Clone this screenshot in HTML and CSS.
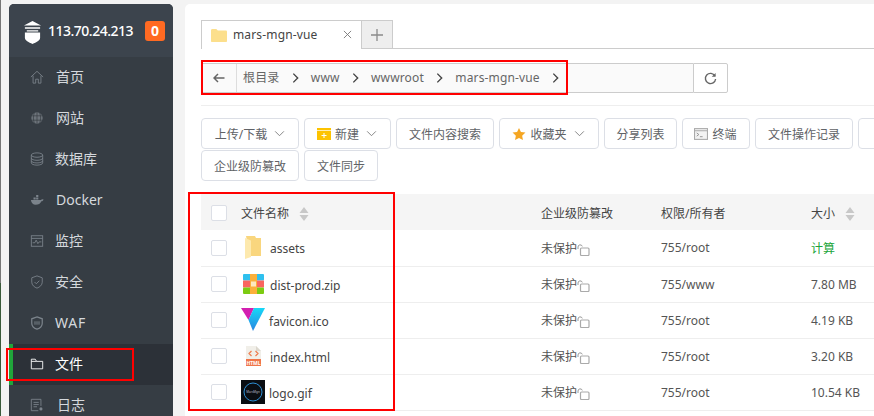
FILE: index.html
```html
<!DOCTYPE html>
<html>
    <head>
        <meta charset="utf-8">
        <link rel="stylesheet" href="styles.css">
    </head>
    <body>
        <svg class="defs" width="0" height="0">
            <defs>
                <linearGradient id="vuegrad" x1="0" y1="0" x2="0" y2="1">
                    <stop offset="0" stop-color="#16d8f8"/>
                    <stop offset="1" stop-color="#2a85e0"/>
                </linearGradient>
            </defs>
            <symbol id="lock" viewBox="0 0 13 12">
                <path d="M1 5V3a2.200 2.200 0 0 1 4.300-.6" fill="none" stroke="#999" stroke-width="1"/>
                <rect x="3.500" y="4" width="8.500" height="7.500" rx="1" fill="#fff" stroke="#aaa" stroke-width="1.200"/>
            </symbol>
            <symbol id="sort" viewBox="0 0 10 14">
                <path d="M5 0l4.500 6H.5zM5 14L.5 8h9z" fill="#c8c8c8"/>
            </symbol>
            <symbol id="arrow" viewBox="0 0 12 8">
                <path d="M1 1.500l5 5 5-5" fill="none" stroke="#777" stroke-width="1"/>
            </symbol>
            <symbol id="crumb" viewBox="0 0 8 12">
                <path d="M1.500 1l5 5-5 5" fill="none" stroke="#444" stroke-width="1.600"/>
            </symbol>
        </svg>
        <div class="container">
            <div class="menu">
                <div class="server">
                    <svg class="logo" viewBox="0 0 20 24">
                        <path d="M10 0L1 4.500h18zM2 6.500h16v1.500H2zM4 9.500h12V11H4z" fill="#fff"/>
                        <path d="M2 12h16v5.500c0 3-4 5-8 6.500-4-1.500-8-3.500-8-6.500z" fill="#fff"/>
                    </svg>
                    <span class="ip">113.70.24.213</span>
                    <span class="badge">0</span>
                </div>
                <ul class="navlist">
                    <li>
                        <svg viewBox="0 0 16 16"><path d="M1 8l7-6.500L15 8M3.500 6.500V15h3v-4.500h3V15h3V6.500" fill="none" stroke="#7b838b"/></svg>
                        <span>首页</span>
                    </li>
                    <li>
                        <svg viewBox="0 0 16 16"><circle cx="8" cy="8" r="6.500" fill="#6d747b"/><path d="M1.500 5.500h13M1.500 10.500h13M8 1.500v13M5 2c-1.500 3.500-1.500 8.500 0 12M11 2c1.500 3.500 1.500 8.500 0 12" fill="none" stroke="#363d44" stroke-width=".8"/></svg>
                        <span>网站</span>
                    </li>
                    <li>
                        <svg viewBox="0 0 16 16"><ellipse cx="8" cy="3.500" rx="6.500" ry="2.500" fill="none" stroke="#7b838b"/><path d="M1.500 3.500v9c0 1.400 3 2.500 6.500 2.500s6.500-1.100 6.500-2.500v-9M1.500 7c0 1.400 3 2.500 6.500 2.500S14.500 8.400 14.500 7M1.500 10c0 1.400 3 2.500 6.500 2.500s6.500-1.100 6.500-2.500" fill="none" stroke="#7b838b"/></svg>
                        <span class="tight">数据库</span>
                    </li>
                    <li>
                        <svg viewBox="0 0 16 16"><path d="M1 8h11.500c.5-.8 1.500-1 3-.7-.5 1.500-1.500 2.200-2.500 2.200-1 2.700-3.500 4-6.500 4C3.500 13.500 1.500 11.500 1 8z" fill="#7b838b"/><path d="M4 5h2.500v2.300H4zM7 5h2.500v2.300H7zM7 2.300h2.500v2.300H7z" fill="#7b838b"/></svg>
                        <span>Docker</span>
                    </li>
                    <li>
                        <svg viewBox="0 0 16 16"><rect x="1.500" y="2" width="13" height="12" fill="none" stroke="#7b838b"/><path d="M1.500 5h13" stroke="#7b838b"/><path d="M3 10h2.500l1.500-3 2 4 1.500-2H13" fill="none" stroke="#8c949b" stroke-width=".8"/></svg>
                        <span class="tight">监控</span>
                    </li>
                    <li>
                        <svg viewBox="0 0 16 16"><path d="M8 1l6 2.200v5C14 11.500 11 14 8 15c-3-1-6-3.500-6-6.800v-5z" fill="none" stroke="#7b838b"/><path d="M5.200 8l2 2 3.500-3.500" fill="none" stroke="#7b838b"/></svg>
                        <span class="tight">安全</span>
                    </li>
                    <li>
                        <svg viewBox="0 0 16 16"><path d="M8 1l6 2.200v5C14 11.500 11 14 8 15c-3-1-6-3.500-6-6.800v-5z" fill="none" stroke="#7b838b" stroke-width="1.400"/><path d="M4.500 6.800h7M4.500 8h7M4.500 9.200h7" stroke="#7b838b" stroke-width=".7"/></svg>
                        <span class="tight waf">WAF</span>
                    </li>
                    <li class="active">
                        <svg viewBox="0 0 16 16"><path d="M1.500 2.500h4.500l1.500 2.500H14.500v8.500h-13z M1.500 5h6" fill="none" stroke="#fff"/></svg>
                        <span class="tight">文件</span>
                    </li>
                    <li>
                        <svg viewBox="0 0 16 16"><path d="M12.500 9V1.500h-11v13h8M4 5h6M4 7.500h6M4 10h4" fill="none" stroke="#7b838b"/><circle cx="12.500" cy="12.500" r="1.800" fill="#7b838b"/></svg>
                        <span class="wide">日志</span>
                    </li>
                </ul>
            </div>
            <div class="content">
                <div class="tabs">
                    <div class="tab">
                        <svg class="tabfolder" viewBox="0 0 16 13"><path d="M0 1.500C0 .7.500 0 1.300 0h4l1.500 1.500h8c.7 0 1.200.5 1.200 1.200V12c0 .6-.5 1-1 1H1c-.6 0-1-.4-1-1z" fill="#fcdf8c"/></svg>
                        <span class="tabname">mars-mgn-vue</span>
                        <svg class="tabclose" viewBox="0 0 10 10"><path d="M1 1l8 8M9 1l-8 8" stroke="#777" stroke-width="1"/></svg>
                    </div>
                    <div class="tabadd">
                        <svg viewBox="0 0 12 12"><path d="M6 0v12M0 6h12" stroke="#8a8a8a" stroke-width="1.300"/></svg>
                    </div>
                </div>
                <div class="pathbar">
                    <div class="pathinput">
                        <span class="back">
                            <svg viewBox="0 0 12 10"><path d="M11.500 5H1M5 1L1 5l4 4" fill="none" stroke="#666" stroke-width="1.500"/></svg>
                        </span>
                        <span class="crumb">根目录</span>
                        <svg class="sep"><use href="#crumb"/></svg>
                        <span class="crumb">www</span>
                        <svg class="sep"><use href="#crumb"/></svg>
                        <span class="crumb">wwwroot</span>
                        <svg class="sep"><use href="#crumb"/></svg>
                        <span class="crumb">mars-mgn-vue</span>
                        <svg class="sep"><use href="#crumb"/></svg>
                    </div>
                    <div class="refresh">
                        <svg viewBox="0 0 14 14"><path d="M11.800 4.200A5.500 5.500 0 1 0 12.500 7.500" fill="none" stroke="#666" stroke-width="1.500"/><path d="M12.500 1v4.200H8.300z" fill="#666"/></svg>
                    </div>
                </div>
                <div class="toolbar">
                    <div class="btn w98">上传/下载<svg class="caret"><use href="#arrow"/></svg></div>
                    <div class="btn w86">
                        <svg class="btnicon" viewBox="0 0 14 12"><path d="M0 0h14v12H0z" fill="#fdc300"/><path d="M0 2.500h14" stroke="#fff" stroke-width=".7"/><path d="M7 5v5M4.500 7.500h5" stroke="#fff" stroke-width="1"/></svg>新建<svg class="caret"><use href="#arrow"/></svg>
                    </div>
                    <div class="btn w97">文件内容搜索</div>
                    <div class="btn w99">
                        <svg class="btnicon" viewBox="0 0 14 13"><path d="M7 0l2.100 4.400 4.900.6-3.600 3.300.9 4.700L7 10.700 2.700 13l.9-4.700L0 5l4.900-.6z" fill="#f5a623"/></svg>收藏夹<svg class="caret"><use href="#arrow"/></svg>
                    </div>
                    <div class="btn w73">分享列表</div>
                    <div class="btn w67">
                        <svg class="btnicon" viewBox="0 0 13 11"><rect x=".5" y=".5" width="12" height="10" fill="#f3f3f3" stroke="#aaa"/><path d="M.5 2.500h12" stroke="#aaa"/><path d="M2.500 4.500l2 1.500-2 1.500M5.500 8h2.500" fill="none" stroke="#888" stroke-width=".8"/></svg>终端
                    </div>
                    <div class="btn w98">文件操作记录</div>
                    <div class="btn w98">文件</div>
                </div>
                <div class="toolbar">
                    <div class="btn w98">企业级防篡改</div>
                    <div class="btn w74">文件同步</div>
                </div>
                <table class="files">
                    <thead>
                        <tr>
                            <th class="check"><i class="box"></i></th>
                            <th class="name">文件名称<svg class="sort"><use href="#sort"/></svg></th>
                            <th class="guard">企业级防篡改</th>
                            <th class="perm">权限/所有者</th>
                            <th class="size">大小<svg class="sort"><use href="#sort"/></svg></th>
                        </tr>
                    </thead>
                    <tbody>
                        <tr>
                            <td class="check"><i class="box"></i></td>
                            <td class="name"><div class="filecell">
                                <svg class="fileicon" viewBox="0 0 24 24"><path d="M5 0h9l1 2h5v18H9z" fill="#f9d67e"/><path d="M4 2l6 2.500V21l-6 2z" fill="#fde9ae"/></svg>
                                <span>assets</span>
                            </div></td>
                            <td class="guard">未保护<svg class="lock"><use href="#lock"/></svg></td>
                            <td class="perm">755/root</td>
                            <td class="size calc">计算</td>
                        </tr>
                        <tr>
                            <td class="check"><i class="box"></i></td>
                            <td class="name"><div class="filecell">
                                <svg class="fileicon" viewBox="0 0 24 24"><rect x="2" y="2" width="21" height="6.500" rx="1" fill="#2fc0ee"/><rect x="2" y="8.500" width="21" height="7" fill="#f9655f"/><rect x="2" y="15.500" width="21" height="6.500" rx="1" fill="#7ccb11"/><rect x="9" y="2" width="7" height="20" fill="#fbb03b"/><rect x="10" y="9.500" width="5" height="5" fill="#fde9c0"/></svg>
                                <span>dist-prod.zip</span>
                            </div></td>
                            <td class="guard">未保护<svg class="lock"><use href="#lock"/></svg></td>
                            <td class="perm">755/www</td>
                            <td class="size">7.80 MB</td>
                        </tr>
                        <tr>
                            <td class="check"><i class="box"></i></td>
                            <td class="name"><div class="filecell">
                                <svg class="fileicon" viewBox="0 0 24 24"><path d="M0 0h13L7.500 12z" fill="#d21fb0"/><path d="M24 0H13L7.500 12 12 23z" fill="url(#vuegrad)"/></svg>
                                <span class="closer">favicon.ico</span>
                            </div></td>
                            <td class="guard">未保护<svg class="lock"><use href="#lock"/></svg></td>
                            <td class="perm">755/root</td>
                            <td class="size">4.19 KB</td>
                        </tr>
                        <tr>
                            <td class="check"><i class="box"></i></td>
                            <td class="name"><div class="filecell">
                                <svg class="fileicon" viewBox="0 0 24 24"><path d="M5 2h10l5 5v15H5z" fill="#f1efe9"/><path d="M15 2l5 5h-5z" fill="#dcd8ce"/><path d="M5 15h15v7H5z" fill="#f0764a"/><path d="M10.500 7L8 9.500l2.500 2.500M14.500 7L17 9.500 14.500 12" fill="none" stroke="#ee7a4c" stroke-width="1.200"/><text x="12.500" y="21" class="htmltag">HTML</text></svg>
                                <span>index.html</span>
                            </div></td>
                            <td class="guard">未保护<svg class="lock"><use href="#lock"/></svg></td>
                            <td class="perm">755/root</td>
                            <td class="size">3.20 KB</td>
                        </tr>
                        <tr>
                            <td class="check"><i class="box"></i></td>
                            <td class="name"><div class="filecell">
                                <svg class="fileicon" viewBox="0 0 24 24"><rect width="24" height="24" fill="#0a0d12"/><circle cx="12" cy="12" r="9" fill="none" stroke="#2d8fd5" stroke-width="1"/><text x="12" y="13" class="logotag">MarsMgn</text></svg>
                                <span class="closer">logo.gif</span>
                            </div></td>
                            <td class="guard">未保护<svg class="lock"><use href="#lock"/></svg></td>
                            <td class="perm">755/root</td>
                            <td class="size">10.54 KB</td>
                        </tr>
                    </tbody>
                </table>
            </div>
        </div>
        <div class="mark mark-path"></div>
        <div class="mark mark-table"></div>
        <div class="mark mark-menu"></div>
    </body>
</html>
```

FILE: styles.css
```css
html, body{
    margin: 0;
    height: 100%;
    overflow: hidden;
}
body{
    position: relative;
    background: #f3f3f3;
    color: #555;
    font-family: "Noto Sans", "Noto Sans CJK SC", sans-serif;
    font-size: 12px;
}
.defs{
    position: absolute;
}
.container{
    display: flex;
    gap: 12px;
    height: 416px;
    padding: 4px 0 0 8px;
    box-sizing: border-box;
    border-left: 1px solid #777;
    border-image: linear-gradient(#777 68%, #3a5a3a 68%) 1;
}
.menu{
    flex: 0 0 164px;
    background: #363d44;
    border-radius: 5px 5px 0 0;
    overflow: hidden;
}
.server{
    display: flex;
    align-items: center;
    height: 53px;
    padding: 0 8px 0 14px;
    box-sizing: border-box;
    background: #3c444d;
    color: #fff;
}
.logo{
    width: 19px;
    height: 23px;
    margin-top: 3px;
}
.ip{
    flex: 1;
    margin-left: 6px;
    font-size: 14px;
    font-weight: 500;
    letter-spacing: -.5px;
}
.badge{
    width: 20px;
    height: 20px;
    line-height: 20px;
    text-align: center;
    background: #ff6a22;
    border-radius: 3px;
    font-size: 14px;
    font-weight: bold;
}
.navlist{
    list-style-type: none;
    margin: 0;
    padding: 0;
}
.navlist li{
    display: flex;
    align-items: center;
    height: 41px;
    padding-left: 21px;
    color: #d5d9dd;
    font-size: 14px;
}
.navlist li svg{
    width: 14px;
    height: 14px;
    margin-right: 11px;
    margin-top: -1px;
}
.navlist li span{
    margin-left: 1px;
    padding-bottom: 3px;
}
.navlist li .tight{
    margin-left: 0;
}
.navlist li .wide{
    margin-left: 2px;
}
.navlist li .waf{
    letter-spacing: .8px;
}
.navlist .active{
    box-sizing: border-box;
    background: #2c3138;
    border-left: 4px solid #20a53a;
    padding-left: 17px;
    color: #fff;
}
.content{
    flex: 1;
    min-width: 0;
    background: #fff;
    border-radius: 5px 0 0 0;
    padding: 16px 0 0 16px;
    overflow: hidden;
}
.tabs{
    display: flex;
    height: 29px;
    box-sizing: border-box;
    border-bottom: 1px solid #ccc;
}
.tab{
    display: flex;
    align-items: center;
    width: 161px;
    height: 29px;
    box-sizing: border-box;
    padding: 0 9px;
    background: #fff;
    border: 1px solid #ccc;
    border-bottom: none;
}
.tabfolder{
    width: 16px;
    height: 13px;
    margin-right: 6px;
}
.tabname{
    flex: 1;
    color: #444;
    letter-spacing: .15px;
    padding-bottom: 1px;
}
.tabclose{
    width: 9px;
    height: 9px;
    margin-top: -2px;
}
.tabadd{
    display: flex;
    align-items: center;
    justify-content: center;
    width: 31px;
    height: 28px;
    box-sizing: border-box;
    background: #eee;
    border: 1px solid #ccc;
    border-left: none;
    border-bottom: none;
}
.tabadd svg{
    width: 12px;
    height: 12px;
}
.pathbar{
    display: flex;
    height: 30px;
    margin-top: 14px;
    padding-bottom: 12px;
    border-bottom: 1px solid #eee;
}
.pathinput{
    display: flex;
    align-items: center;
    width: 492px;
    box-sizing: border-box;
    background: #fafafa;
    border: 1px solid #ccc;
    border-right: none;
    border-radius: 2px 0 0 2px;
}
.back{
    display: flex;
    align-items: center;
    justify-content: center;
    width: 34px;
    height: 28px;
    border-right: 1px solid #ddd;
}
.back svg{
    width: 12px;
    height: 10px;
}
.crumb{
    padding: 0 5px 2px 6px;
    color: #666;
    letter-spacing: .15px;
}
.sep{
    width: 7px;
    height: 12px;
    margin: 0 6px 0 7.4px;
}
.refresh{
    display: flex;
    align-items: center;
    justify-content: center;
    width: 35px;
    box-sizing: border-box;
    border: 1px solid #ccc;
    border-radius: 0 2px 2px 0;
}
.refresh svg{
    width: 13px;
    height: 13px;
}
.toolbar{
    display: flex;
    gap: 5px;
    height: 31px;
    margin-bottom: 1px;
}
.pathbar + .toolbar{
    margin-top: 12px;
}
.btn{
    display: flex;
    flex: none;
    align-items: center;
    justify-content: center;
    height: 31px;
    box-sizing: border-box;
    background: #fff;
    border: 1px solid #dcdfe6;
    border-radius: 4px;
    color: #606266;
    white-space: nowrap;
}
.w98{ width: 98px; }
.w86{ width: 87px; }
.w97{ width: 98px; }
.w99{ width: 100px; }
.w73{ width: 73px; }
.w67{ width: 68px; }
.w74{ width: 74px; }
.caret{
    width: 11px;
    height: 7px;
    margin-left: 7px;
}
.btnicon{
    width: 14px;
    height: 12px;
    margin-right: 4px;
    margin-left: -1px;
}
.files{
    width: 673px;
    margin-top: 13px;
    border-collapse: collapse;
    table-layout: fixed;
    color: #555;
}
.files th{
    height: 36px;
    padding: 1px 0 0;
    box-sizing: border-box;
    background: #f5f5f5;
    font-weight: normal;
    text-align: left;
    color: #444;
}
.files td{
    height: 36px;
    padding: 0;
    box-sizing: border-box;
    border-bottom: 1px solid #eee;
}
.check{
    width: 40px;
    padding-left: 10px !important;
    box-sizing: border-box;
}
.box{
    display: block;
    width: 14px;
    height: 14px;
    background: #fff;
    border: 1px solid #dcdfe6;
    border-radius: 2px;
}
.name{
    width: 300px;
}
.guard{
    width: 120px;
}
.perm{
    width: 150px;
}
.filecell{
    display: flex;
    align-items: center;
}
.filecell span{
    color: #444;
    padding-top: 2px;
}
.filecell .closer{
    margin-left: -1px;
}
.fileicon{
    width: 24px;
    height: 24px;
    margin-right: 5px;
}
.htmltag{
    fill: #fff;
    font-size: 5px;
    font-weight: bold;
    text-anchor: middle;
}
.logotag{
    fill: #bbc;
    font-size: 3px;
    text-anchor: middle;
}
.sort{
    width: 10px;
    height: 14px;
    margin-left: 10px;
    vertical-align: -3px;
}
.lock{
    width: 13px;
    height: 12px;
    vertical-align: -3px;
}
.calc{
    color: #20a53a;
}
.mark{
    position: absolute;
    box-sizing: border-box;
    border: 2px solid #f00;
    pointer-events: none;
}
.mark-path{
    left: 201px;
    top: 60px;
    width: 367px;
    height: 35px;
}
.mark-table{
    left: 188px;
    top: 192px;
    width: 207px;
    height: 219px;
}
.mark-menu{
    left: 6px;
    top: 348px;
    width: 128px;
    height: 33px;
}
```
